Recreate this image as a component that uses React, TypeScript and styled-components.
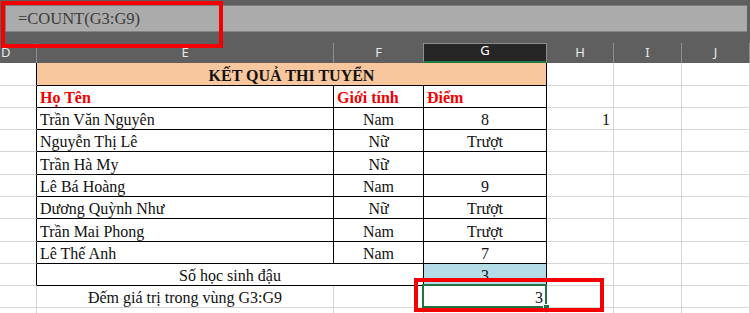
import React from 'react';
import styled, { createGlobalStyle, css } from 'styled-components';

const GRID = '#d6d6d6';
const LINE = '#000';
const serif = '"Liberation Serif", "Times New Roman", serif';

const GlobalStyle = createGlobalStyle`
    html, body {
        margin: 0;
        padding: 0;
        background: #fff;
        overflow: hidden;
    }
`;

const Window = styled.div`
    position: relative;
    width: 750px;
    height: 313px;
    overflow: hidden;
    background: #fff;
`;

const Chrome = styled.div`
    background: #5f5f5f;
    padding: 5px 3px 11px 5px;
`;

const FormulaBar = styled.div`
    height: 27px;
    background: #ababab;
    border-top: 1px solid #7c7c7c;
    border-left: 1px solid #7c7c7c;
    border-bottom: 1px solid #858585;
    box-sizing: border-box;
    padding: 3px 0 0 12px;
    font-family: ${serif};
    font-size: 16.5px;
    line-height: 20px;
    color: #3b3b3b;
`;

const Sheet = styled.div`
    display: grid;
    grid-template-columns: 37px 297px 90px 123px 67px 68px 68px;
    grid-template-rows: 20px 23px 22px 22px 22px 23px 22px 22px 23px 22px 22px 22px 22px;
`;

const ColHead = styled.div<{ $active?: boolean }>`
    box-sizing: border-box;
    display: flex;
    align-items: flex-end;
    justify-content: center;
    padding-bottom: 3px;
    background: #5f5f5f;
    border-right: 1px solid #8e8e8e;
    font-family: "Noto Sans", "Open Sans", sans-serif;
    font-size: 13px;
    line-height: 16px;
    color: #e8e8e8;
    ${({ $active }) =>
        $active &&
        css`
            background: #262626;
            border-top: 1px solid #8e8e8e;
            border-left: 1px solid #8e8e8e;
            margin-left: -1px;
            border-bottom: 2px solid #1f7a45;
            color: #fff;
        `}
`;

const FirstHead = styled(ColHead)`
    justify-content: flex-start;
    padding-left: 1px;
`;

type Align = 'left' | 'center' | 'right';

interface CellProps {
    $align?: Align;
    $span?: number;
    $bold?: boolean;
    $red?: boolean;
    $fill?: string;
    $edgeR?: boolean;
    $edgeB?: boolean;
}

const justify = { left: 'flex-start', center: 'center', right: 'flex-end' };

const Cell = styled.div<CellProps>`
    box-sizing: border-box;
    position: relative;
    display: flex;
    align-items: flex-end;
    justify-content: ${({ $align = 'left' }) => justify[$align]};
    padding: 0 3px 0 3px;
    grid-column: span ${({ $span = 1 }) => $span};
    background: ${({ $fill }) => $fill || '#fff'};
    border-right: 1px solid ${({ $edgeR }) => ($edgeR ? LINE : GRID)};
    border-bottom: 1px solid ${({ $edgeB }) => ($edgeB ? LINE : GRID)};
    font-family: ${serif};
    font-size: 16px;
    line-height: 18px;
    white-space: nowrap;
    font-weight: ${({ $bold }) => ($bold ? 700 : 400)};
    color: ${({ $red }) => ($red ? '#f00000' : '#111')};
`;

const ActiveCell = styled(Cell)`
    &::after {
        content: '';
        position: absolute;
        left: -2px;
        top: -2px;
        right: -1px;
        bottom: -1px;
        border: 2px solid #217346;
        pointer-events: none;
    }
`;

const FillHandle = styled.span`
    position: absolute;
    right: -4px;
    bottom: -4px;
    width: 5px;
    height: 5px;
    background: #217346;
    border: 1px solid #fff;
    z-index: 2;
`;

const Highlight = styled.div<{ $left: number; $top: number; $width: number; $height: number }>`
    position: absolute;
    left: ${({ $left }) => $left}px;
    top: ${({ $top }) => $top}px;
    width: ${({ $width }) => $width}px;
    height: ${({ $height }) => $height}px;
    box-sizing: border-box;
    border: 4px solid #f40000;
    z-index: 5;
    pointer-events: none;
`;

const students = [
    { name: 'Trần Văn Nguyên', gender: 'Nam', score: '8', extra: '1' },
    { name: 'Nguyễn Thị Lê', gender: 'Nữ', score: 'Trượt' },
    { name: 'Trần Hà My', gender: 'Nữ', score: '' },
    { name: 'Lê Bá Hoàng', gender: 'Nam', score: '9' },
    { name: 'Dương Quỳnh Như', gender: 'Nữ', score: 'Trượt' },
    { name: 'Trần Mai Phong', gender: 'Nam', score: 'Trượt' },
    { name: 'Lê Thế Anh', gender: 'Nam', score: '7' },
];

const Blank = () => (
    <>
        <Cell />
        <Cell />
        <Cell />
    </>
);

export default function App() {
    return (
        <Window>
            <GlobalStyle />
            <Chrome>
                <FormulaBar>=COUNT(G3:G9)</FormulaBar>
            </Chrome>

            <Sheet>
                <FirstHead>D</FirstHead>
                <ColHead>E</ColHead>
                <ColHead>F</ColHead>
                <ColHead $active>G</ColHead>
                <ColHead>H</ColHead>
                <ColHead>I</ColHead>
                <ColHead>J</ColHead>

                <Cell $edgeR />
                <Cell $span={3} $align="center" $bold $fill="#f8c79e" $edgeR $edgeB>
                    KẾT QUẢ THI TUYỂN
                </Cell>
                <Blank />

                <Cell $edgeR />
                <Cell $bold $red $edgeR $edgeB>Họ Tên</Cell>
                <Cell $bold $red $edgeR $edgeB>Giới tính</Cell>
                <Cell $bold $red $edgeR $edgeB>Điểm</Cell>
                <Blank />

                {students.map((s) => (
                    <React.Fragment key={s.name}>
                        <Cell $edgeR />
                        <Cell $edgeR $edgeB>{s.name}</Cell>
                        <Cell $align="center" $edgeR $edgeB>{s.gender}</Cell>
                        <Cell $align="center" $edgeR $edgeB>{s.score}</Cell>
                        <Cell $align="right">{s.extra}</Cell>
                        <Cell />
                        <Cell />
                    </React.Fragment>
                ))}

                <Cell $edgeR />
                <Cell $span={2} $align="center" $edgeR $edgeB>Số học sinh đậu</Cell>
                <Cell $align="center" $fill="#b4dce6" $edgeR $edgeB>3</Cell>
                <Blank />

                <Cell />
                <Cell $align="center">Đếm giá trị trong vùng G3:G9</Cell>
                <Cell />
                <ActiveCell $align="right">
                    3
                    <FillHandle />
                </ActiveCell>
                <Blank />

                <Cell />
                <Cell />
                <Cell />
                <Cell />
                <Blank />
            </Sheet>

            <Highlight $left={1} $top={1} $width={222} $height={47} />
            <Highlight $left={414} $top={278} $width={190} $height={34} />
        </Window>
    );
}
